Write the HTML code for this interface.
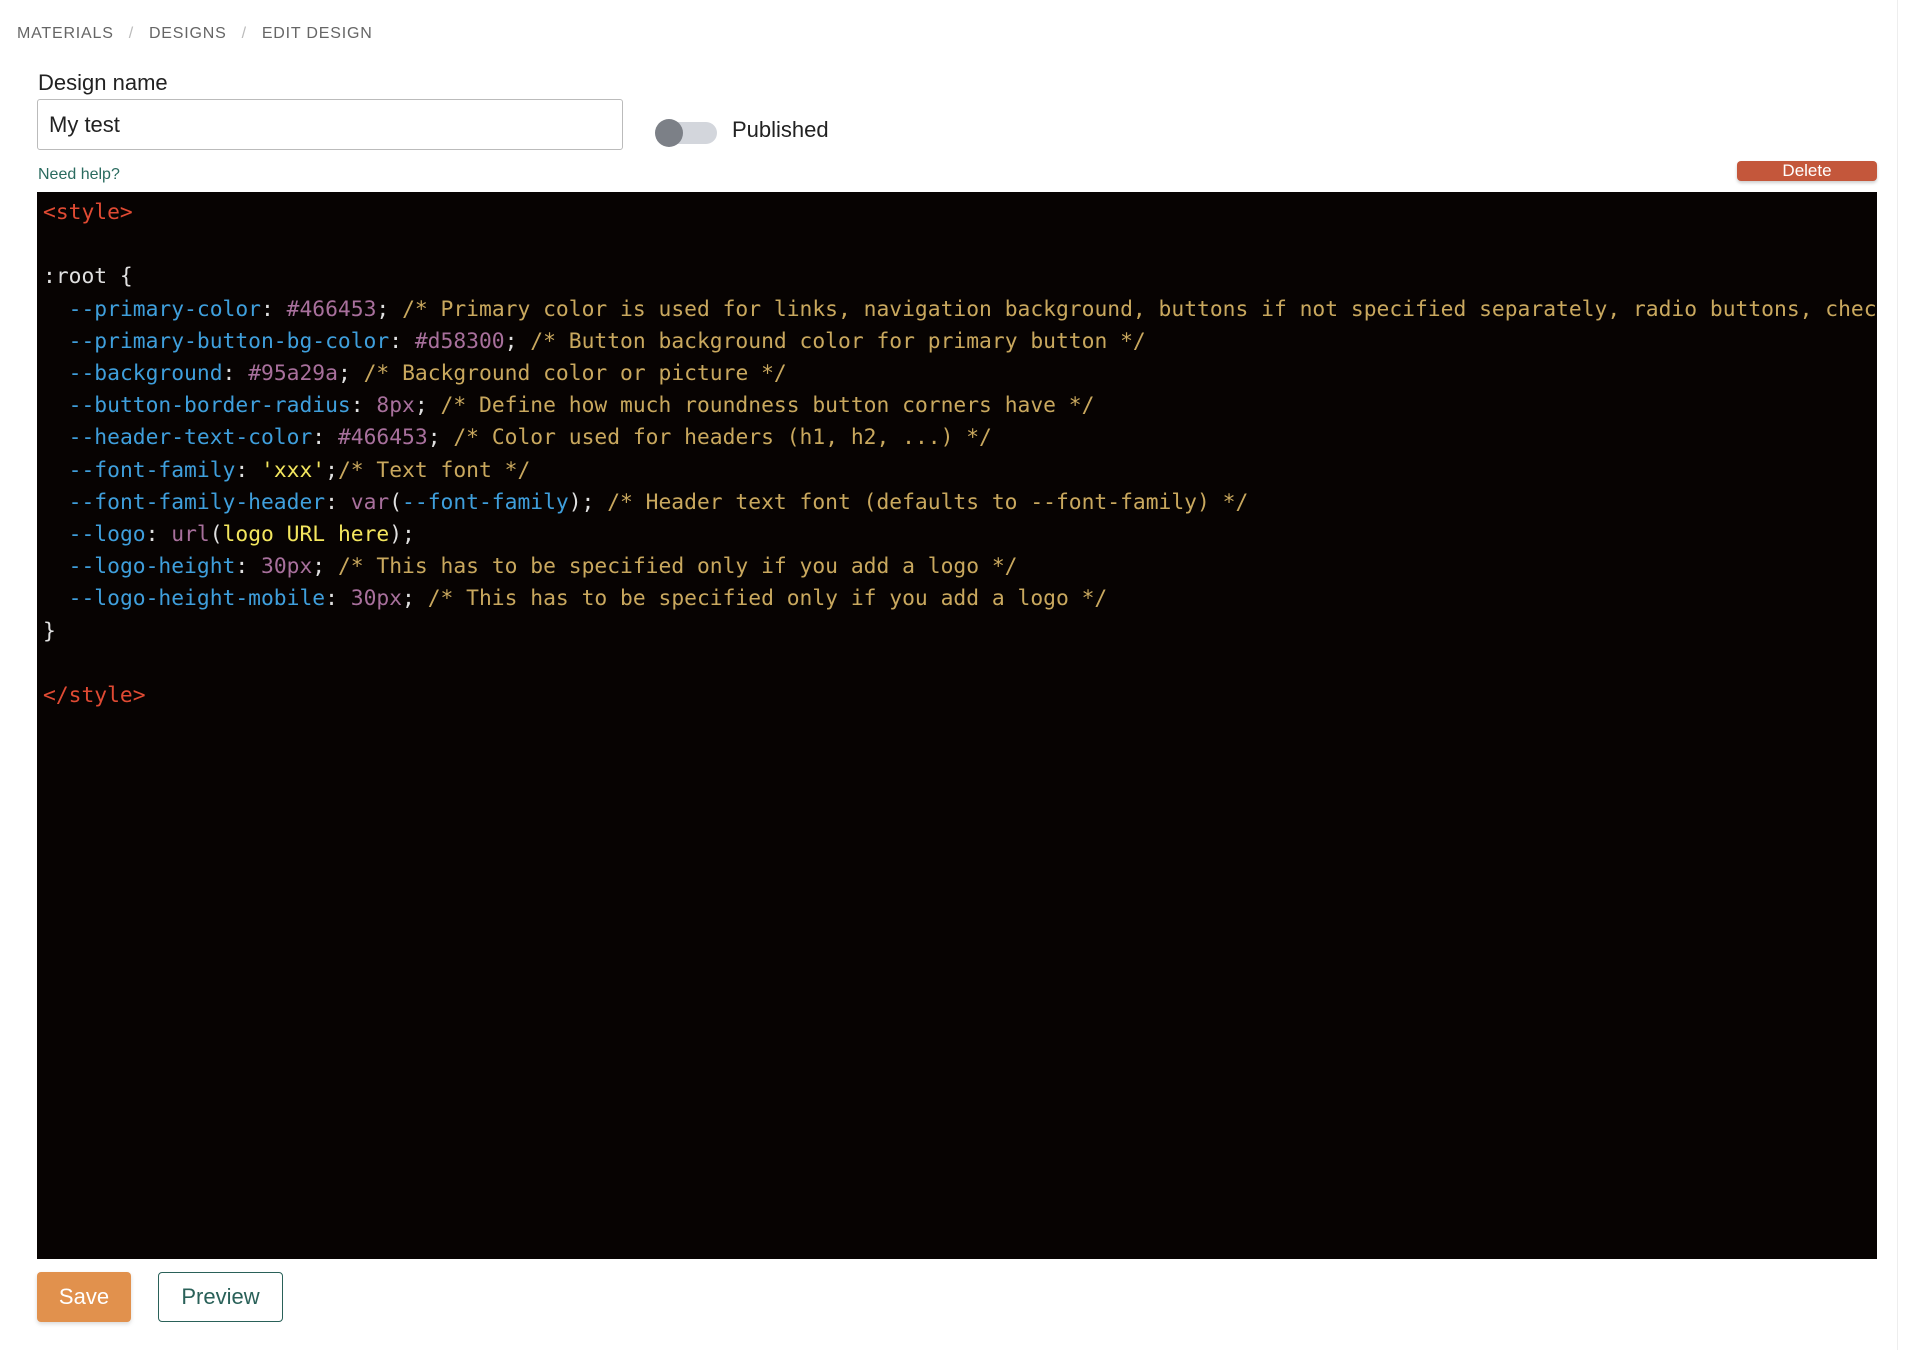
<!DOCTYPE html>
<html><head><meta charset="utf-8"><style>
*{box-sizing:border-box;margin:0;padding:0}
body{width:1914px;height:1350px;background:#fff;position:relative;font-family:"Liberation Sans",sans-serif;overflow:hidden}
.a{position:absolute}
.crumb{left:17px;top:25px;font-size:16px;color:#666;letter-spacing:.8px}
.crumb span{color:#bbb;margin:0 15px}
.lbl{left:38px;top:70px;font-size:22px;color:#222}
.inp{left:37px;top:99px;width:586px;height:51px;border:1px solid #bbb;border-radius:3px;font-size:22px;color:#222;padding:12px 11px}
.tgl{left:661px;top:122px;width:56px;height:22px;background:#d3d6dc;border-radius:11px}
.knob{left:655px;top:119px;width:28px;height:28px;border-radius:50%;background:#7c8087}
.pub{left:732px;top:117px;font-size:22px;color:#222}
.help{left:38px;top:166px;font-size:16px;color:#2a6b5f}
.del{left:1737px;top:161px;width:140px;height:20px;background:#c4573b;border-radius:4px;color:#fff;font-size:17px;text-align:center;line-height:20px;box-shadow:0 2px 3px rgba(0,0,0,.2)}
.ed{left:37px;top:192px;width:1840px;height:1067px;background:#070302;overflow:hidden}
pre{font-family:"DejaVu Sans Mono",monospace;font-size:21.3px;line-height:32.2px;color:#e0e0e0;padding:5px 0 0 6px;white-space:pre}
.t{color:#e04a33}.p{color:#3f9fdc}.n{color:#a8709c}.c{color:#c9a85e}.s{color:#f3e65e}
.rline{left:1897px;top:0;width:1px;height:1350px;background:#eee}
.save{left:37px;top:1272px;width:94px;height:50px;background:#e1914d;border-radius:4px;color:#fff;font-size:22px;text-align:center;line-height:50px;box-shadow:0 2px 4px rgba(0,0,0,.15)}
.prev{left:158px;top:1272px;width:125px;height:50px;border:1px solid #2a6159;border-radius:4px;color:#2a6159;font-size:22px;text-align:center;line-height:48px}
</style></head><body>
<div class="a crumb">MATERIALS<span>/</span>DESIGNS<span>/</span>EDIT DESIGN</div>
<div class="a lbl">Design name</div>
<div class="a inp">My test</div>
<div class="a tgl"></div><div class="a knob"></div>
<div class="a pub">Published</div>
<div class="a help">Need help?</div>
<div class="a del">Delete</div>
<div class="a rline"></div>
<div class="a ed"><pre><span class="t">&lt;style&gt;</span>

:root {
  <span class="p">--primary-color</span>: <span class="n">#466453</span>; <span class="c">/* Primary color is used for links, navigation background, buttons if not specified separately, radio buttons, checkboxes */</span>
  <span class="p">--primary-button-bg-color</span>: <span class="n">#d58300</span>; <span class="c">/* Button background color for primary button */</span>
  <span class="p">--background</span>: <span class="n">#95a29a</span>; <span class="c">/* Background color or picture */</span>
  <span class="p">--button-border-radius</span>: <span class="n">8px</span>; <span class="c">/* Define how much roundness button corners have */</span>
  <span class="p">--header-text-color</span>: <span class="n">#466453</span>; <span class="c">/* Color used for headers (h1, h2, ...) */</span>
  <span class="p">--font-family</span>: <span class="s">'xxx'</span>;<span class="c">/* Text font */</span>
  <span class="p">--font-family-header</span>: <span class="n">var</span>(<span class="p">--font-family</span>); <span class="c">/* Header text font (defaults to --font-family) */</span>
  <span class="p">--logo</span>: <span class="n">url</span>(<span class="s">logo URL here</span>);
  <span class="p">--logo-height</span>: <span class="n">30px</span>; <span class="c">/* This has to be specified only if you add a logo */</span>
  <span class="p">--logo-height-mobile</span>: <span class="n">30px</span>; <span class="c">/* This has to be specified only if you add a logo */</span>
}

<span class="t">&lt;/style&gt;</span></pre></div>
<div class="a save">Save</div>
<div class="a prev">Preview</div>
</body></html>
